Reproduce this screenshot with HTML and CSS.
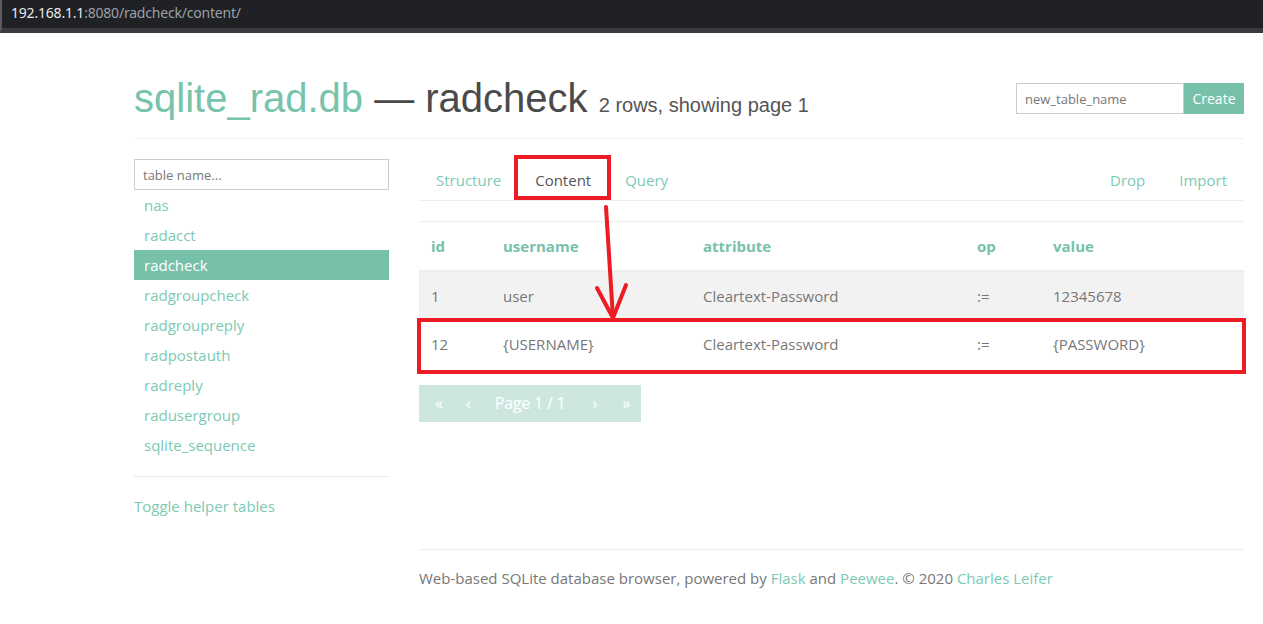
FILE: index.html
```html
<!DOCTYPE html>
<html>
<head>
<meta charset="utf-8">
<title>radcheck</title>
<link rel="stylesheet" href="styles.css">
</head>
<body>
<div class="topbar"><span class="host">192.168.1.1</span><span class="path">:8080/radcheck/content/</span></div>
<div class="page">
  <header class="head">
    <h1 class="title"><a class="db">sqlite_rad.db</a> — radcheck <small>2 rows, showing page 1</small></h1>
    <form class="create">
      <input class="create-input" placeholder="new_table_name">
      <button type="button" class="create-btn">Create</button>
    </form>
  </header>
  <div class="layout">
    <aside class="sidebar">
      <input class="filter" placeholder="table name...">
      <ul class="tables">
        <li><a>nas</a></li>
        <li><a>radacct</a></li>
        <li class="active"><a>radcheck</a></li>
        <li><a>radgroupcheck</a></li>
        <li><a>radgroupreply</a></li>
        <li><a>radpostauth</a></li>
        <li><a>radreply</a></li>
        <li><a>radusergroup</a></li>
        <li><a>sqlite_sequence</a></li>
      </ul>
      <hr class="side-hr">
      <a class="toggle">Toggle helper tables</a>
    </aside>
    <main class="main">
      <nav class="tabs">
        <a class="tab">Structure</a>
        <a class="tab active">Content</a>
        <a class="tab">Query</a>
        <span class="spacer"></span>
        <a class="tab">Drop</a>
        <a class="tab">Import</a>
      </nav>
      <table class="data">
        <thead>
          <tr><th class="c-id">id</th><th class="c-user">username</th><th class="c-attr">attribute</th><th class="c-op">op</th><th>value</th></tr>
        </thead>
        <tbody>
          <tr class="odd"><td>1</td><td>user</td><td>Cleartext-Password</td><td>:=</td><td>12345678</td></tr>
          <tr><td>12</td><td>{USERNAME}</td><td>Cleartext-Password</td><td>:=</td><td>{PASSWORD}</td></tr>
        </tbody>
      </table>
      <div class="pager">
        <span class="pg first">«</span>
        <span class="pg prev">‹</span>
        <span class="pg label">Page 1 / 1</span>
        <span class="pg next">›</span>
        <span class="pg last">»</span>
      </div>
    </main>
    <footer class="footer">
      <hr class="foot-hr">
      <p class="foot-text">Web-based SQLite database browser, powered by <a>Flask</a> and <a>Peewee</a>. © 2020 <a>Charles Leifer</a></p>
    </footer>
  </div>
</div>
<svg class="annot" width="1263" height="624" viewBox="0 0 1263 624">
  <rect x="516" y="157" width="93" height="41" fill="none" stroke="#ed1c24" stroke-width="4"/>
  <rect x="419" y="320" width="825" height="52" fill="none" stroke="#ed1c24" stroke-width="4"/>
  <path d="M606 207 L613 318" stroke="#ed1c24" stroke-width="4" fill="none" stroke-linecap="round"/>
  <path d="M597 288 L613 318 L626 285" stroke="#ed1c24" stroke-width="4" fill="none" stroke-linecap="round" stroke-linejoin="round"/>
</svg>
</body>
</html>
```
FILE: styles.css
```css
* { box-sizing: border-box; }
html, body { margin: 0; padding: 0; background: #fff; }
body {
  font-family: "Open Sans", "Noto Sans", sans-serif;
  font-size: 15px;
  color: #777;
  position: relative;
  width: 1263px;
  height: 624px;
  overflow: hidden;
}
a { color: #7ccab4; text-decoration: none; }

.topbar {
  height: 33px;
  background: #202124;
  border-bottom: 5px solid #3a3b3d;
  border-left: 2px solid #5a5b5e;
  padding: 3px 0 0 9px;
  font-family: "Noto Sans", "Open Sans", sans-serif;
  font-size: 14px;
  line-height: 20px;
  letter-spacing: -0.2px;
}
.topbar .host { color: #e8eaed; }
.topbar .path { color: #9aa0a6; }

.page { margin-left: 134px; width: 1110px; }

.head {
  display: flex;
  align-items: flex-start;
  justify-content: space-between;
  padding-top: 41px;
  padding-bottom: 9px;
  border-bottom: 1px solid #f0f0ee;
}
.title {
  margin: 0;
  font-family: "Liberation Sans", Arial, sans-serif;
  font-weight: normal;
  font-size: 40px;
  line-height: 48px;
  color: #4a4a4a;
}
.title .db { color: #77c3ab; }
.title small { font-size: 20px; color: #555; }
.create { display: flex; margin-top: 9px; }
.create-input {
  width: 168px;
  height: 31px;
  border: 1px solid #ccc;
  padding: 0 8px;
  font-family: "Open Sans", sans-serif;
  font-size: 13px;
  color: #555;
  border-radius: 0;
  outline: none;
}
.create-input::placeholder { color: #777; }
.create-btn {
  width: 60px;
  height: 31px;
  border: 0;
  background: #77c1aa;
  color: #fff;
  font-family: "Open Sans", sans-serif;
  font-size: 14px;
  padding: 0;
  border-radius: 0;
}

.layout {
  display: grid;
  grid-template-columns: 255px 825px;
  grid-template-rows: auto auto;
  column-gap: 30px;
  padding-top: 20px;
}
.sidebar { grid-column: 1; grid-row: 1 / span 2; }
.filter {
  display: block;
  width: 255px;
  height: 31px;
  border: 1px solid #ccc;
  padding: 0 8px;
  font-family: "Open Sans", sans-serif;
  font-size: 13px;
  outline: none;
  border-radius: 0;
}
.filter::placeholder { color: #777; }
.tables { list-style: none; margin: 0; padding: 0; }
.tables li { height: 30px; line-height: 30px; padding-left: 10px; }
.tables li a { color: #7ccab4; }
.tables li.active { background: #77c1aa; }
.tables li.active a { color: #fff; }
.side-hr { border: 0; border-top: 1px solid #e6e6e6; margin: 16px 0 17px; }
.toggle { display: block; line-height: 24px; }

.main { grid-column: 2; grid-row: 1; }
.tabs {
  display: flex;
  height: 42px;
  border-bottom: 1px solid #eee;
}
.tab { padding: 0 17px; line-height: 42px; color: #7ccab4; }
.tab.active { color: #555; }
.tabs .spacer { flex: 1; }

.data {
  width: 825px;
  margin-top: 20px;
  border-collapse: collapse;
  border-top: 1px solid #eee;
}
.data th, .data td { text-align: left; padding: 0 12px; height: 49px; }
.data th { color: #77c1aa; font-weight: bold; border-bottom: 2px solid #eee; }
.data td { color: #777; }
.data tr.odd td { background: #f2f2f2; }
.c-id { width: 72px; }
.c-user { width: 200px; }
.c-attr { width: 274px; }
.c-op { width: 76px; }

.pager {
  display: flex;
  align-items: center;
  width: 222px;
  height: 37px;
  margin-top: 16px;
  background: #cde7df;
  color: #fff;
  white-space: nowrap;
  font-size: 16px;
}
.pg { line-height: 37px; }
.pg.first { padding-left: 16px; }
.pg.prev { padding-left: 23px; }
.pg.label { padding-left: 24px; font-size: 16px; letter-spacing: -0.2px; }
.pg.next { padding-left: 27px; }
.pg.last { padding-left: 25px; }

.footer { grid-column: 2; grid-row: 2; }
.foot-hr { border: 0; border-top: 1px solid #eee; margin: 127px 0 16px; }
.foot-text { margin: 0; line-height: 24px; color: #777; }

.annot { position: absolute; left: 0; top: 0; pointer-events: none; }
```
